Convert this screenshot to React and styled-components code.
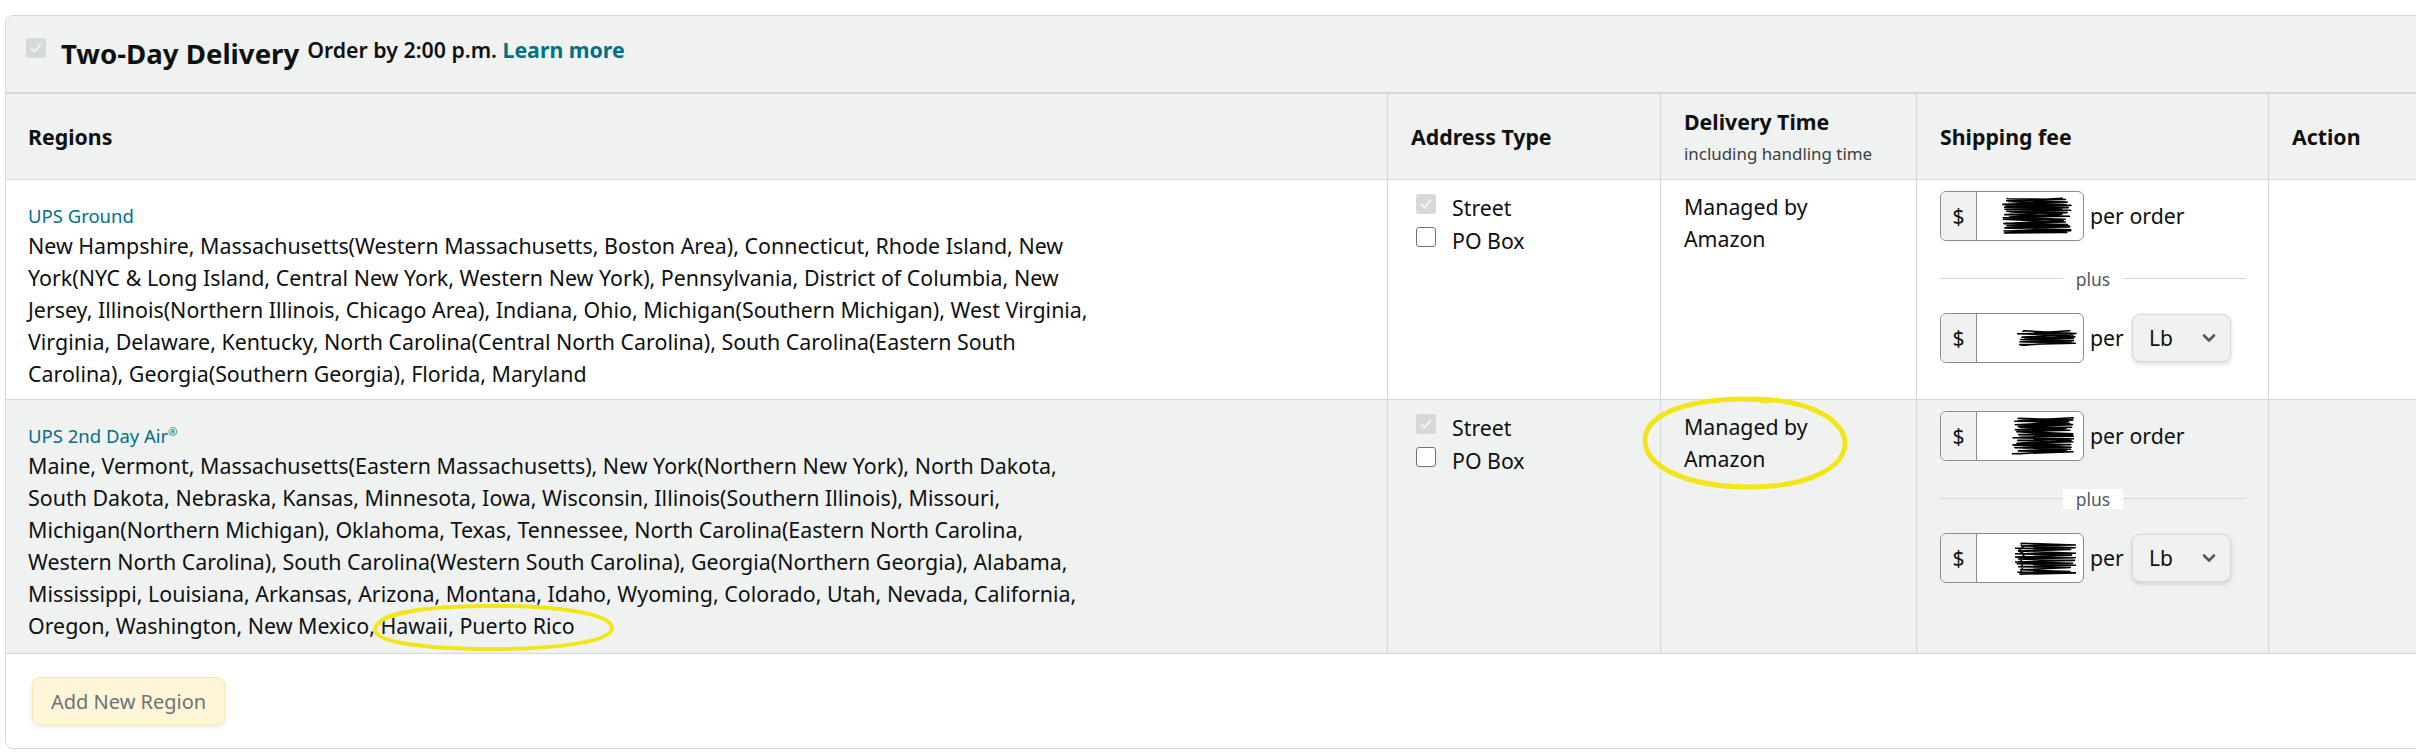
import React from 'react';
import styled, { createGlobalStyle } from 'styled-components';

const GlobalStyle = createGlobalStyle`
  html, body {
    margin: 0;
    padding: 0;
    background: #fff;
    overflow: hidden;
  }
  body {
    font-family: "Noto Sans", "Open Sans", sans-serif;
    color: #0f1111;
  }
  * { box-sizing: border-box; }
`;

const groundRegions = [
  'New Hampshire, Massachusetts(Western Massachusetts, Boston Area), Connecticut, Rhode Island, New',
  'York(NYC & Long Island, Central New York, Western New York), Pennsylvania, District of Columbia, New',
  'Jersey, Illinois(Northern Illinois, Chicago Area), Indiana, Ohio, Michigan(Southern Michigan), West Virginia,',
  'Virginia, Delaware, Kentucky, North Carolina(Central North Carolina), South Carolina(Eastern South',
  'Carolina), Georgia(Southern Georgia), Florida, Maryland',
];

const airRegions = [
  'Maine, Vermont, Massachusetts(Eastern Massachusetts), New York(Northern New York), North Dakota,',
  'South Dakota, Nebraska, Kansas, Minnesota, Iowa, Wisconsin, Illinois(Southern Illinois), Missouri,',
  'Michigan(Northern Michigan), Oklahoma, Texas, Tennessee, North Carolina(Eastern North Carolina,',
  'Western North Carolina), South Carolina(Western South Carolina), Georgia(Northern Georgia), Alabama,',
  'Mississippi, Louisiana, Arkansas, Arizona, Montana, Idaho, Wyoming, Colorado, Utah, Nevada, California,',
  'Oregon, Washington, New Mexico, Hawaii, Puerto Rico',
];

// redaction scribble, drawn back and forth like a marker
const scribblePath = (w, h, seed) => {
  let s = seed;
  const r = () => {
    s = (s * 9301 + 49297) % 233280;
    return s / 233280;
  };
  const n = Math.max(6, Math.round(h / 1.4));
  let d = `M ${(w * 0.1).toFixed(1)} 1.5`;
  for (let i = 0; i < n; i++) {
    const y = 1.5 + (i / (n - 1)) * (h - 3) + (r() - 0.5) * 1.6;
    const x = i % 2 ? w * (0.9 + r() * 0.1) : w * (r() * 0.12);
    d += ` L ${x.toFixed(1)} ${y.toFixed(1)}`;
  }
  for (let i = n - 1; i >= 0; i -= 2) {
    const y = 1.5 + (i / (n - 1)) * (h - 3) + (r() - 0.5) * 2;
    const x = i % 4 ? w * (0.05 + r() * 0.1) : w * (0.85 + r() * 0.15);
    d += ` L ${x.toFixed(1)} ${y.toFixed(1)}`;
  }
  return d;
};

const Page = styled.div`
  width: 2416px;
  height: 756px;
  padding: 15px 0 0 5px;
  overflow: hidden;
`;

const Card = styled.div`
  width: 2520px;
  border: 1px solid #d5d9d9;
  border-radius: 8px;
  background: #fff;
`;

const CardHeader = styled.div`
  display: flex;
  align-items: flex-start;
  height: 76px;
  padding: 21px 20px 0;
  background: #f0f2f2;
  border-radius: 8px 8px 0 0;
`;

const Box = styled.span`
  flex: none;
  display: inline-flex;
  align-items: center;
  justify-content: center;
  width: 20px;
  height: 20px;
  margin-top: ${(p) => p.$top || 0}px;
  border-radius: 3px;
  background: ${(p) => (p.$checked ? '#d5d9d9' : '#fff')};
  border: ${(p) => (p.$checked ? 'none' : '1.5px solid #6f7373')};
`;

const CheckBox = ({ checked, top }) => (
  <Box $checked={checked} $top={top}>
    {checked && (
      <svg width="14" height="14" viewBox="0 0 14 14">
        <path d="M2.5 7.5 L5.5 10.5 L11.5 3.5" fill="none" stroke="#f3f4f4" strokeWidth="2" strokeLinecap="round" strokeLinejoin="round" />
      </svg>
    )}
  </Box>
);

const Title = styled.h2`
  margin: 0 0 0 15px;
  font-size: 27.6px;
  line-height: 32px;
  font-weight: 700;
  color: #0f1111;
`;

const Cutoff = styled.span`
  margin: 1px 0 0 8px;
  font-size: 21.3px;
  line-height: 24px;
  font-weight: 600;
  color: #0f1111;
`;

const Link = styled.a`
  color: #007185;
  font-weight: 700;
  text-decoration: none;
`;

const Row = styled.div`
  display: grid;
  grid-template-columns: 1381px 273px 256px 352px 1fr;
  min-height: ${(p) => p.$minH || 0}px;
  background: ${(p) => (p.$shade ? '#f0f2f2' : '#fff')};
  border-top: ${(p) => (p.$head ? '2px solid #d5d9d9' : 'none')};
  border-bottom: 1px solid #d5d9d9;
`;

const HeadCell = styled.div`
  display: flex;
  flex-direction: column;
  justify-content: center;
  padding: 0 23px;
  &:first-child { padding-left: 22px; }
  &:not(:first-child) { border-left: 1px solid #d5d9d9; }
`;

const HeadLabel = styled.span`
  font-size: 21.3px;
  line-height: 28px;
  font-weight: 700;
`;

const HeadNote = styled.span`
  margin-top: 7px;
  font-size: 16.9px;
  line-height: 22px;
  color: #3b3f3f;
`;

const Cell = styled.div`
  position: relative;
  padding: 11px 23px 11px;
  &:not(:first-child) { border-left: 1px solid #d5d9d9; }
`;

const RegionCell = styled(Cell)`
  padding: 21px 22px 9px;
`;

const Carrier = styled.div`
  font-size: 18.5px;
  line-height: 29px;
  color: #007185;
  sup {
    font-size: 11px;
    line-height: 0;
    vertical-align: 7px;
  }
`;

const RegionLine = styled.div`
  font-size: 21.4px;
  line-height: 32px;
  white-space: nowrap;
`;

const Options = styled.div`
  display: flex;
  flex-direction: column;
  padding-left: 5px;
`;

const Option = styled.label`
  display: flex;
  align-items: flex-start;
  gap: 16px;
  font-size: 21.3px;
  line-height: 33px;
`;

const BodyText = styled.div`
  font-size: 21.3px;
  line-height: 32px;
`;

const FeeLine = styled.div`
  display: flex;
  align-items: center;
  font-size: 21.3px;
`;

const InputGroup = styled.div`
  display: flex;
  width: 144px;
  height: 50px;
  border: 1px solid #888c8c;
  border-radius: 6px;
  overflow: hidden;
  background: #fff;
`;

const Prefix = styled.span`
  display: flex;
  align-items: center;
  justify-content: center;
  width: 36px;
  background: #f0f2f2;
  border-right: 1px solid #888c8c;
  font-size: 21px;
`;

const Field = styled.span`
  flex: 1;
  display: flex;
  align-items: center;
  justify-content: flex-end;
  padding: ${(p) => p.$pad || '0 10px 0 0'};
`;

const Per = styled.span`
  margin-left: 6px;
  line-height: 30px;
`;

const Divider = styled.div`
  display: flex;
  align-items: center;
  width: 306px;
  height: 72px;
  padding-top: 3px;
`;

const Rule = styled.span`
  flex: 1;
  height: 1px;
  background: #d5d9d9;
`;

const Plus = styled.span`
  padding: 0 13px;
  background: #fff;
  font-size: 17.5px;
  line-height: 20px;
  color: #565959;
`;

const Select = styled.div`
  display: flex;
  align-items: center;
  justify-content: space-between;
  width: 99px;
  height: 48px;
  margin-left: 8px;
  padding: 0 14px 0 16px;
  background: #f0f2f2;
  border: 1px solid #d5d9d9;
  border-radius: 8px;
  box-shadow: 0 2px 5px rgba(15, 17, 17, 0.15);
  font-size: 21px;
`;

const Footer = styled.div`
  padding: 23px 26px;
`;

const AddButton = styled.button`
  height: 48px;
  padding: 0 18px;
  font-family: inherit;
  font-size: 20px;
  color: #6f7373;
  background: #fdf6d9;
  border: 1px solid #f7e9b0;
  border-radius: 8px;
  box-shadow: 0 2px 5px rgba(213, 217, 217, 0.6);
`;

const Mark = styled.svg`
  position: absolute;
  left: ${(p) => p.$x}px;
  top: ${(p) => p.$y}px;
  overflow: visible;
  pointer-events: none;
`;

const Scribble = ({ w, h, seed }) => (
  <svg width={w} height={h} viewBox={`0 0 ${w} ${h}`}>
    <path d={scribblePath(w, h, seed)} fill="none" stroke="#000" strokeWidth="1.6" strokeLinejoin="round" strokeLinecap="round" />
  </svg>
);

const Chevron = () => (
  <svg width="14" height="10" viewBox="0 0 14 10">
    <path d="M2 2.5 L7 7.5 L12 2.5" fill="none" stroke="#565959" strokeWidth="2.6" strokeLinecap="round" strokeLinejoin="round" />
  </svg>
);

const Fee = ({ first, second }) => (
  <>
    <FeeLine>
      <InputGroup>
        <Prefix>$</Prefix>
        <Field $pad={first.pad}>
          <Scribble w={first.w} h={first.h} seed={first.seed} />
        </Field>
      </InputGroup>
      <Per>per order</Per>
    </FeeLine>
    <Divider>
      <Rule />
      <Plus>plus</Plus>
      <Rule />
    </Divider>
    <FeeLine>
      <InputGroup>
        <Prefix>$</Prefix>
        <Field $pad={second.pad}>
          <Scribble w={second.w} h={second.h} seed={second.seed} />
        </Field>
      </InputGroup>
      <Per>per</Per>
      <Select>
        <span>Lb</span>
        <Chevron />
      </Select>
    </FeeLine>
  </>
);

const AddressTypes = () => (
  <Options>
    <Option>
      <CheckBox checked top={2.5} />
      Street
    </Option>
    <Option>
      <CheckBox top={2.5} />
      PO Box
    </Option>
  </Options>
);

const App = () => (
  <Page>
    <GlobalStyle />
    <Card>
      <CardHeader>
        <CheckBox checked top={1} />
        <Title>Two-Day Delivery</Title>
        <Cutoff>
          Order by 2:00 p.m. <Link href="#">Learn more</Link>
        </Cutoff>
      </CardHeader>

      <Row $head $shade $minH={88}>
        <HeadCell><HeadLabel>Regions</HeadLabel></HeadCell>
        <HeadCell><HeadLabel>Address Type</HeadLabel></HeadCell>
        <HeadCell>
          <HeadLabel>Delivery Time</HeadLabel>
          <HeadNote>including handling time</HeadNote>
        </HeadCell>
        <HeadCell><HeadLabel>Shipping fee</HeadLabel></HeadCell>
        <HeadCell><HeadLabel>Action</HeadLabel></HeadCell>
      </Row>

      <Row $minH={220}>
        <RegionCell>
          <Carrier>UPS Ground</Carrier>
          {groundRegions.map((line) => (
            <RegionLine key={line}>{line}</RegionLine>
          ))}
        </RegionCell>
        <Cell><AddressTypes /></Cell>
        <Cell><BodyText>Managed by<br />Amazon</BodyText></Cell>
        <Cell>
          <Fee
            first={{ w: 72, h: 38, seed: 11, pad: '0 11px 0 0' }}
            second={{ w: 60, h: 16, seed: 47, pad: '0 6px 0 0' }}
          />
        </Cell>
        <Cell />
      </Row>

      <Row $shade $minH={254}>
        <RegionCell>
          <Carrier>UPS 2nd Day Air<sup>®</sup></Carrier>
          {airRegions.map((line) => (
            <RegionLine key={line}>{line}</RegionLine>
          ))}
          <Mark $x={364} $y={203} width="246" height="48" viewBox="0 0 246 48">
            <path d="M 10 20 C 14 8, 70 3, 126 3 C 190 3, 242 11, 242 25 C 242 38, 190 46, 124 46 C 58 46, 4 40, 5 26 C 6 18, 18 12, 44 8" fill="none" stroke="#f2e61b" strokeWidth="4" strokeLinecap="round" />
          </Mark>
        </RegionCell>
        <Cell><AddressTypes /></Cell>
        <Cell>
          <BodyText>Managed by<br />Amazon</BodyText>
          <Mark $x={-19} $y={-4} width="206" height="94" viewBox="0 0 206 94">
            <path d="M 110 3 C 170 3, 204 26, 203 48 C 202 72, 165 92, 104 91 C 42 90, 3 70, 3 44 C 3 20, 40 4, 100 3 C 112 3, 120 4, 126 5" fill="none" stroke="#f2e61b" strokeWidth="5" strokeLinecap="round" />
          </Mark>
        </Cell>
        <Cell>
          <Fee
            first={{ w: 62, h: 38, seed: 5, pad: '0 9px 0 0' }}
            second={{ w: 61, h: 33, seed: 29, pad: '0 7px 0 0' }}
          />
        </Cell>
        <Cell />
      </Row>

      <Footer>
        <AddButton type="button">Add New Region</AddButton>
      </Footer>
    </Card>
  </Page>
);

export default App;
